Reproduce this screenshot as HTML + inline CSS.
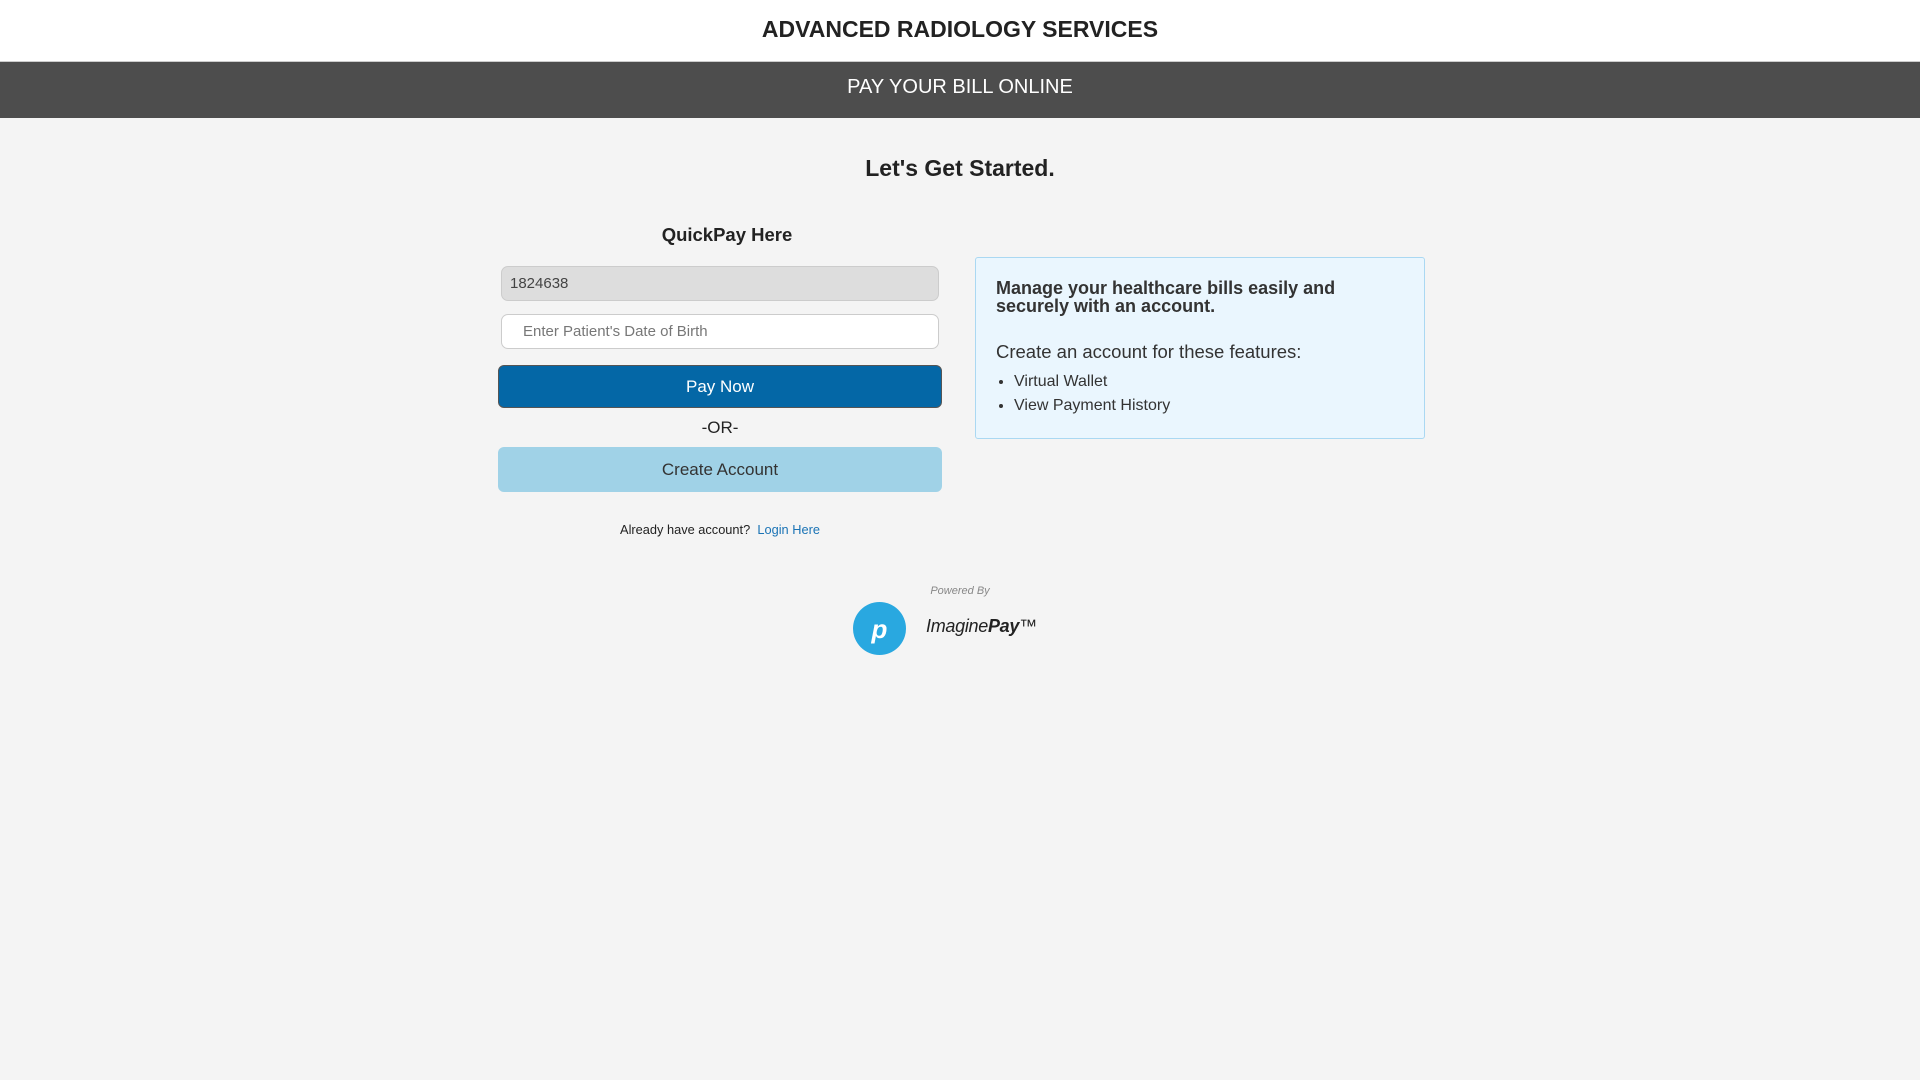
<!DOCTYPE html>
<html><head><meta charset="utf-8"><style>
*{margin:0;padding:0;box-sizing:border-box}
body{width:1920px;height:1080px;background:#f4f4f4;font-family:"Liberation Sans",Arial,sans-serif;color:#333;position:relative;overflow:hidden}
.abs{position:absolute}
.hdr{left:0;top:0;width:1920px;height:62px;background:#fff;border-bottom:1px solid #ccc}
.hdr div{text-align:center;font-weight:bold;font-size:23px;line-height:58px;color:#222}
.bar{left:0;top:62px;width:1920px;height:56px;background:#4d4d4d;color:#fff;text-align:center;font-size:20px;line-height:50px}
.c{text-align:center}
.inp{left:501px;width:438px;height:35px;border:1px solid #ccc;border-radius:7px;font-size:15px;line-height:33px}
.btn{left:498px;width:444px;border-radius:6px;text-align:center;font-size:17px}
</style></head><body>
<div class="abs hdr"><div>ADVANCED RADIOLOGY SERVICES</div></div>
<div class="abs bar">PAY YOUR BILL ONLINE</div>
<div class="abs c" style="left:0;width:1920px;top:155px;font-size:23px;font-weight:bold;color:#222">Let's Get Started.</div>
<div class="abs c" style="left:527px;width:400px;top:224px;font-size:18.5px;font-weight:bold;color:#222">QuickPay Here</div>
<div class="abs inp" style="top:266px;background:#dddddd;padding-left:8px;color:#444">1824638</div>
<div class="abs inp" style="top:314px;background:#fff;padding-left:21px;color:#777">Enter Patient's Date of Birth</div>
<div class="abs btn" style="top:365px;height:43px;line-height:41px;background:#0467a6;border:1px solid #555;color:#fff">Pay Now</div>
<div class="abs c" style="left:498px;width:444px;top:418px;font-size:17px;color:#222">-OR-</div>
<div class="abs btn" style="top:447px;height:45px;line-height:45px;background:#a0d2e7;color:#333">Create Account</div>
<div class="abs c" style="left:498px;width:444px;top:522px;font-size:12.8px;color:#222">Already have account?&nbsp; <span style="color:#1a73b5">Login Here</span></div>
<div class="abs" style="left:975px;top:257px;width:450px;height:182px;background:#eaf6fe;border:1px solid #aad8f2;border-radius:3px"></div>
<div class="abs" style="left:996px;top:279px;width:400px;font-size:18px;font-weight:bold;line-height:18px;color:#333">Manage your healthcare bills easily and securely with an account.</div>
<div class="abs" style="left:996px;top:341px;font-size:18.5px;color:#333">Create an account for these features:</div>
<ul class="abs" style="left:1014px;top:370px;font-size:16px;line-height:24px;color:#333">
<li>Virtual Wallet</li><li>View Payment History</li></ul>
<div class="abs c" style="left:0;width:1920px;top:585px;font-size:11px;font-style:italic;color:#888">Powered By</div>
<div class="abs" style="left:853px;top:602px;width:53px;height:53px;border-radius:50%;background:#29a8e0;color:#fff;font-weight:bold;font-style:italic;font-size:26px;text-align:center;line-height:54px">p</div>
<div class="abs" style="left:926px;top:616px;font-size:18px;font-style:italic;color:#222;letter-spacing:-0.3px">Imagine<b>Pay</b>™</div>
</body></html>
